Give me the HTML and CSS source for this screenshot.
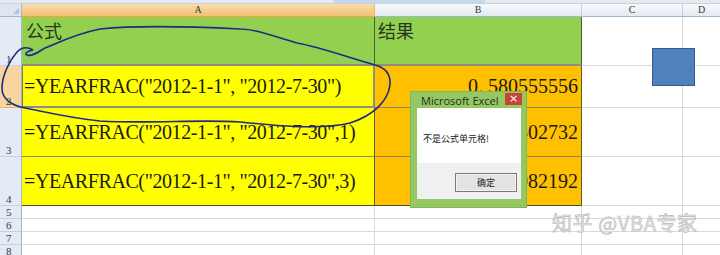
FILE: index.html
```html
<!DOCTYPE html>
<html>
<head>
<meta charset="utf-8">
<link rel="stylesheet" href="styles.css">
</head>
<body>
<div class="page">
  <div class="topbar"><div class="tb-left"></div><div class="tb-blue"></div><div class="tb-right"></div></div>
  <div class="sheet">
    <div class="corner"><span class="tri"></span></div>
    <div class="ch ch-sel">A</div>
    <div class="ch">B</div>
    <div class="ch">C</div>
    <div class="ch ch-last">D</div>

    <div class="rh">1</div>
    <div class="c green a">公式</div>
    <div class="c green b">结果</div>
    <div class="c"></div>
    <div class="c last"></div>

    <div class="rh rh-sel">2</div>
    <div class="c yellow a f sel">=YEARFRAC("2012-1-1", "2012-7-30")</div>
    <div class="c orange b v">0. 580555556</div>
    <div class="c"></div>
    <div class="c last"></div>

    <div class="rh">3</div>
    <div class="c yellow a f">=YEARFRAC("2012-1-1", "2012-7-30",1)</div>
    <div class="c orange b v">0.576502732</div>
    <div class="c"></div>
    <div class="c last"></div>

    <div class="rh">4</div>
    <div class="c yellow a f dk">=YEARFRAC("2012-1-1", "2012-7-30",3)</div>
    <div class="c orange b v dk">0.578082192</div>
    <div class="c"></div>
    <div class="c last"></div>

    <div class="rh">5</div><div class="c"></div><div class="c"></div><div class="c"></div><div class="c last"></div>
    <div class="rh">6</div><div class="c"></div><div class="c"></div><div class="c"></div><div class="c last"></div>
    <div class="rh">7</div><div class="c"></div><div class="c"></div><div class="c"></div><div class="c last"></div>
    <div class="rh">8</div><div class="c"></div><div class="c"></div><div class="c"></div><div class="c last"></div>
  </div>

  <div class="shape"></div>

  <svg class="scribble" width="720" height="255" viewBox="0 0 720 255">
    <path d="M 33,50 C 28,47 22,47 17,52 C 10,60 2,75 2,88 C 2,98 10,105 25,108 C 50,113 70,118 100,121 C 150,124 200,119 240,122 C 280,126 320,130 350,123 C 375,115 388,100 390,85 C 391,72 383,67 375,65 C 350,58 320,47 297,43 C 270,35 255,29 240,29 C 200,27 140,25 100,29 C 75,34 55,44 45,48 C 38,52 32,57 27,55 C 24,54 27,51 33,50" fill="none" stroke="#1e2a86" stroke-width="1.6"/>
  </svg>

  <div class="dialog">
    <div class="dlg-title"><span>Microsoft Excel</span><span class="dlg-close">×</span></div>
    <div class="dlg-client">
      <div class="dlg-msg">不是公式单元格!</div>
      <div class="dlg-foot"><div class="dlg-btn">确定</div></div>
    </div>
  </div>

  <div class="watermark">知乎 @VBA专家</div>
</div>
</body>
</html>
```
FILE: styles.css
```css
html, body {
  margin: 0;
  padding: 0;
  background: #ffffff;
}
.page {
  position: relative;
  width: 720px;
  height: 255px;
  overflow: hidden;
  background: #ffffff;
}
.topbar {
  display: flex;
  height: 4px;
  background: #e6eaef;
  border-bottom: 1px solid #c9d3de;
  box-sizing: border-box;
}
.tb-left { width: 333px; }
.tb-blue { width: 152px; background: #c6d8ee; }
.tb-right { flex: 1; }

.sheet {
  display: grid;
  grid-template-columns: 22px 353px 207px 101px 1fr;
  grid-template-rows: 13px 49px 42px 49px 49px 13px 13px 13px 13px;
}
.sheet > div { box-sizing: border-box; }

.corner {
  position: relative;
  background: #dde6f1;
  border-right: 1px solid #9eb6ce;
  border-bottom: 1px solid #9eb6ce;
}
.tri {
  position: absolute;
  right: 2px;
  bottom: 2px;
  width: 0;
  height: 0;
  border-left: 6px solid transparent;
  border-bottom: 6px solid #b3c4d8;
}
.ch {
  background: linear-gradient(#f7f9fc, #e4e9f0);
  border-right: 1px solid #c4d0dd;
  border-bottom: 1px solid #9eb6ce;
  font-family: "Liberation Serif", serif;
  font-size: 10px;
  line-height: 12px;
  color: #27413e;
  text-align: center;
}
.ch-sel {
  background: linear-gradient(#f9ddad, #f3c272);
  border-bottom: 1px solid #f0a04a;
  border-right: 1px solid #e8b778;
}
.ch-last { border-right: none; }

.rh {
  background: #e4ebf5;
  border-right: 1px solid #9eb6ce;
  border-bottom: 1px solid #c3d0df;
  font-family: "Liberation Serif", serif;
  font-size: 11px;
  color: #3a3a3a;
  padding-left: 6px;
  display: flex;
  align-items: flex-end;
  line-height: 11px;
}
.rh-sel {
  background: #f8d59c;
  border-bottom: 1px solid #e9b46a;
}

.c {
  border-right: 1px solid #d9d9d9;
  border-bottom: 1px solid #d9d9d9;
}
.c.last { border-right: none; }

.green {
  background: #92d050;
  border-right: 1px solid #4f5e3a;
  border-bottom: 2px solid #8d8d82;
  font-family: "Noto Sans CJK SC", sans-serif;
  font-size: 18px;
  line-height: 22px;
  color: #2a3520;
  padding-top: 2px;
}
.green.a { padding-left: 4px; }
.green.b { padding-left: 3px; }

.yellow { background: #ffff00; }
.orange { background: #ffc000; }

.f, .v {
  display: flex;
  align-items: center;
  font-family: "Liberation Serif", serif;
  font-size: 20px;
  color: #1a1a1a;
  border-right: 1px solid #5c5a3a;
  border-bottom: 1px solid #8a886a;
}
.f {
  padding-left: 2px;
  letter-spacing: -0.4px;
  white-space: nowrap;
}
.v {
  justify-content: flex-end;
  padding-right: 3px;
}
.dk { border-bottom: 1px solid #4c4a30; }
.sel {
  border-bottom: 2px solid #8d8d82;
  border-right: 2px solid #8d8d82;
  box-shadow: inset 1px 0 0 #7a7a6a;
}

.shape {
  position: absolute;
  left: 652px;
  top: 48px;
  width: 43px;
  height: 38px;
  box-sizing: border-box;
  background: #4f81bd;
  border: 1px solid #385d8a;
}

.scribble {
  position: absolute;
  left: 0;
  top: 0;
  pointer-events: none;
}

.dialog {
  position: absolute;
  left: 410px;
  top: 91px;
  width: 117px;
  height: 117px;
  box-sizing: border-box;
  background: #94c862;
  border: 1px solid #86b556;
  display: flex;
  flex-direction: column;
  padding: 0 5px 8px 6px;
}
.dlg-title {
  height: 16px;
  display: flex;
  justify-content: space-between;
  align-items: flex-start;
  padding-left: 4px;
  font-family: "Open Sans", "DejaVu Sans", sans-serif;
  font-size: 11px;
  line-height: 17px;
  color: #2b2b2b;
  white-space: nowrap;
}
.dlg-close {
  margin-top: 1px;
  margin-right: -1px;
  width: 17px;
  height: 12px;
  background: #c7443a;
  color: #ffffff;
  font-size: 11px;
  line-height: 11px;
  text-align: center;
  font-family: "DejaVu Sans", sans-serif;
}
.dlg-client {
  flex: 1;
  display: flex;
  flex-direction: column;
  background: #ffffff;
}
.dlg-msg {
  height: 55px;
  box-sizing: border-box;
  padding: 25px 0 0 6px;
  font-family: "Noto Sans CJK SC", sans-serif;
  font-size: 9px;
  line-height: 12px;
  color: #222;
  white-space: nowrap;
}
.dlg-foot {
  flex: 1;
  background: #f0f0f0;
  display: flex;
  justify-content: flex-end;
  align-items: flex-start;
  padding: 10px 4px 0 0;
}
.dlg-btn {
  width: 62px;
  height: 19px;
  box-sizing: border-box;
  border: 1px solid #7a7a7a;
  background: #e3e3e3;
  box-shadow: inset 0 0 0 1px #f4f4f4;
  font-family: "Noto Sans CJK SC", sans-serif;
  font-size: 9px;
  line-height: 17px;
  text-align: center;
  color: #222;
}

.watermark {
  position: absolute;
  left: 552px;
  top: 210px;
  font-family: "Noto Sans CJK SC", sans-serif;
  font-size: 20px;
  line-height: 26px;
  letter-spacing: 0.6px;
  color: #e6e6e6;
  -webkit-text-stroke: 0.6px #b8b8b8;
  white-space: nowrap;
}
```
